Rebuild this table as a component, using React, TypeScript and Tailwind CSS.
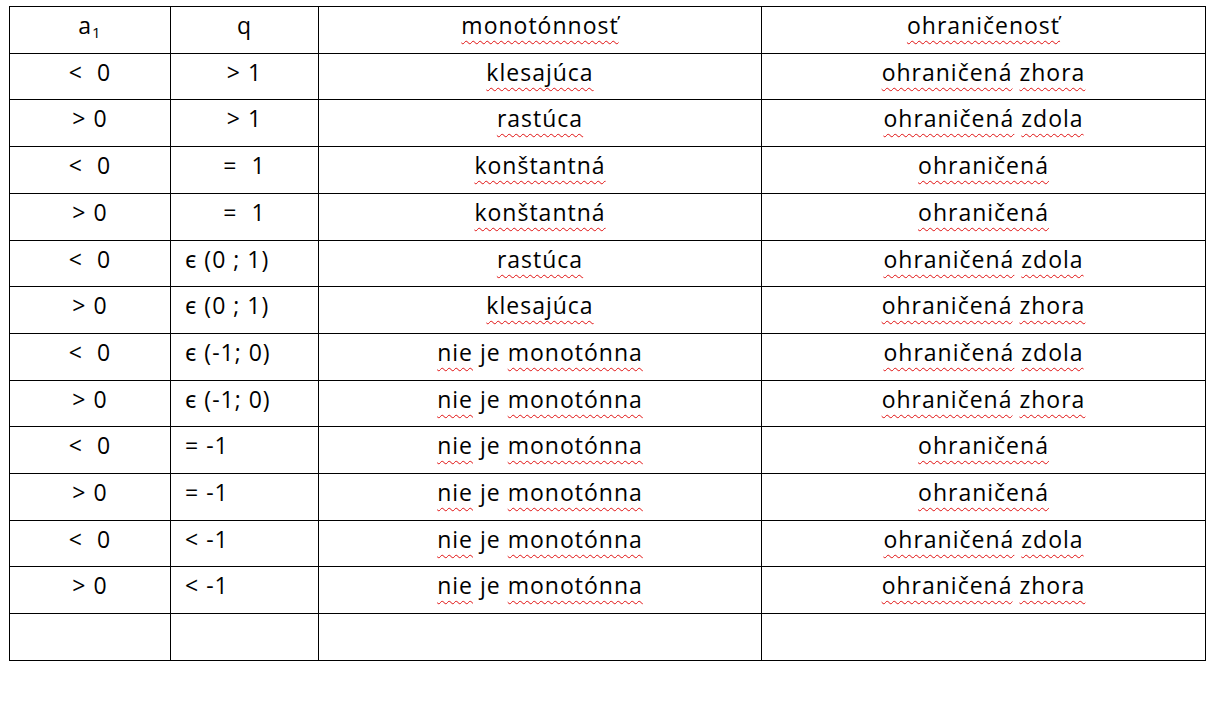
import React from "react";

type Row = { a: string; q: string; qAlign: "center" | "left"; mono: string[]; bound: string[] };

const rows: Row[] = [
  { a: "<  0", q: "> 1", qAlign: "center", mono: ["klesajúca"], bound: ["ohraničená", "zhora"] },
  { a: "> 0", q: "> 1", qAlign: "center", mono: ["rastúca"], bound: ["ohraničená", "zdola"] },
  { a: "<  0", q: "=  1", qAlign: "center", mono: ["konštantná"], bound: ["ohraničená"] },
  { a: "> 0", q: "=  1", qAlign: "center", mono: ["konštantná"], bound: ["ohraničená"] },
  { a: "<  0", q: "ϵ (0 ; 1)", qAlign: "left", mono: ["rastúca"], bound: ["ohraničená", "zdola"] },
  { a: "> 0", q: "ϵ (0 ; 1)", qAlign: "left", mono: ["klesajúca"], bound: ["ohraničená", "zhora"] },
  { a: "<  0", q: "ϵ (-1; 0)", qAlign: "left", mono: ["nie", "je", "monotónna"], bound: ["ohraničená", "zdola"] },
  { a: "> 0", q: "ϵ (-1; 0)", qAlign: "left", mono: ["nie", "je", "monotónna"], bound: ["ohraničená", "zhora"] },
  { a: "<  0", q: "= -1", qAlign: "left", mono: ["nie", "je", "monotónna"], bound: ["ohraničená"] },
  { a: "> 0", q: "= -1", qAlign: "left", mono: ["nie", "je", "monotónna"], bound: ["ohraničená"] },
  { a: "<  0", q: "< -1", qAlign: "left", mono: ["nie", "je", "monotónna"], bound: ["ohraničená", "zdola"] },
  { a: "> 0", q: "< -1", qAlign: "left", mono: ["nie", "je", "monotónna"], bound: ["ohraničená", "zhora"] },
];

const cell =
  "border-r border-b border-black pt-[2px] leading-[32px] whitespace-pre overflow-hidden";

function Words({ words }: { words: string[] }) {
  return (
    <>
      {words.map((w, i) => (
        <React.Fragment key={i}>
          {i > 0 && " "}
          <span
            className={
              w === "je"
                ? ""
                : "underline decoration-wavy decoration-[#e01010] decoration-1 underline-offset-[6px]"
            }
          >
            {w}
          </span>
        </React.Fragment>
      ))}
    </>
  );
}

export default function App() {
  return (
    <div
      className="w-[1214px] h-[728px] bg-white text-black text-[23px] tracking-[1px]"
      style={{ fontFamily: '"Open Sans", "Noto Sans", "DejaVu Sans", sans-serif' }}
    >
      <div className="pl-[9px] pt-[6px]">
        <div className="grid grid-cols-[161px_148px_443px_444px] grid-rows-[repeat(14,46.71px)] w-[1197px] border-l border-t border-black">
          <div className={`${cell} text-center`}>
            a<span className="text-[15px] relative top-[4px]">1</span>
          </div>
          <div className={`${cell} text-center`}>q</div>
          <div className={`${cell} text-center`}>
            <Words words={["monotónnosť"]} />
          </div>
          <div className={`${cell} text-center`}>
            <Words words={["ohraničenosť"]} />
          </div>

          {rows.map((r, i) => (
            <React.Fragment key={i}>
              <div className={`${cell} text-center`}>{r.a}</div>
              <div className={`${cell} ${r.qAlign === "center" ? "text-center" : "text-left pl-[14px]"}`}>
                {r.q}
              </div>
              <div className={`${cell} text-center`}>
                <Words words={r.mono} />
              </div>
              <div className={`${cell} text-center`}>
                <Words words={r.bound} />
              </div>
            </React.Fragment>
          ))}

          <div className={cell}></div>
          <div className={cell}></div>
          <div className={cell}></div>
          <div className={cell}></div>
        </div>
      </div>
    </div>
  );
}
